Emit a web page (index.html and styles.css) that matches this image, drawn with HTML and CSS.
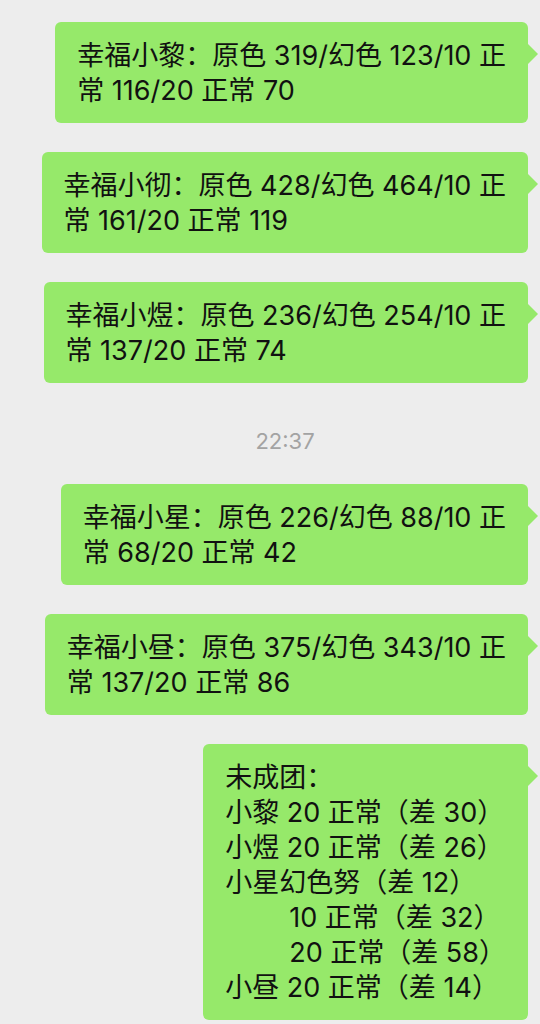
FILE: index.html
```html
<!DOCTYPE html>
<html lang="zh-CN">
<head>
    <meta charset="UTF-8">
    <meta name="viewport" content="width=device-width, initial-scale=1.0">
    <title>聊天</title>
    <link rel="stylesheet" href="styles.css">
</head>
<body>
    <div class="chat">
        <div class="msg">
            <div class="bubble">幸福小黎：原色 319/幻色 123/10 正<br>常 116/20 正常 70</div>
        </div>
        <div class="msg">
            <div class="bubble">幸福小彻：原色 428/幻色 464/10 正<br>常 161/20 正常 119</div>
        </div>
        <div class="msg">
            <div class="bubble">幸福小煜：原色 236/幻色 254/10 正<br>常 137/20 正常 74</div>
        </div>

        <div class="time">22:37</div>

        <div class="msg">
            <div class="bubble">幸福小星：原色 226/幻色 88/10 正<br>常 68/20 正常 42</div>
        </div>
        <div class="msg">
            <div class="bubble">幸福小昼：原色 375/幻色 343/10 正<br>常 137/20 正常 86</div>
        </div>
        <div class="msg">
            <div class="bubble">未成团：<br>
                小黎 20 正常（差 30）<br>
                小煜 20 正常（差 26）<br>
                小星幻色努（差 12）<br>
                <span class="indent">10 正常（差 32）</span><br>
                <span class="indent">20 正常（差 58）</span><br>
                小昼 20 正常（差 14）</div>
        </div>
    </div>
</body>
</html>
```

FILE: styles.css
```css
/* Page */
body {
    margin: 0;
    background-color: #ededed;
    font-family: Inter, "Noto Sans CJK SC", sans-serif;
}

/* Chat column */
.chat {
    display: flex;
    flex-direction: column;
    gap: 29px;
    padding: 22px 12px 0 12px;
}

.msg {
    display: flex;
    justify-content: flex-end;
}

/* Green bubble with tail on the right */
.bubble {
    position: relative;
    background-color: #96e96a;
    color: #111;
    font-size: 27px;
    line-height: 35px;
    padding: 16px 22px 15px;
    border-radius: 6px;
}

.bubble::after {
    content: "";
    position: absolute;
    top: 21px;
    right: -10px;
    border-top: 11px solid transparent;
    border-bottom: 11px solid transparent;
    border-left: 11px solid #96e96a;
}

.indent {
    padding-left: 64px;
}

/* Timestamp */
.time {
    text-align: center;
    color: #a3a3a3;
    font-size: 22px;
    line-height: 26px;
    padding: 16px 0 1px 30px;
}
```
